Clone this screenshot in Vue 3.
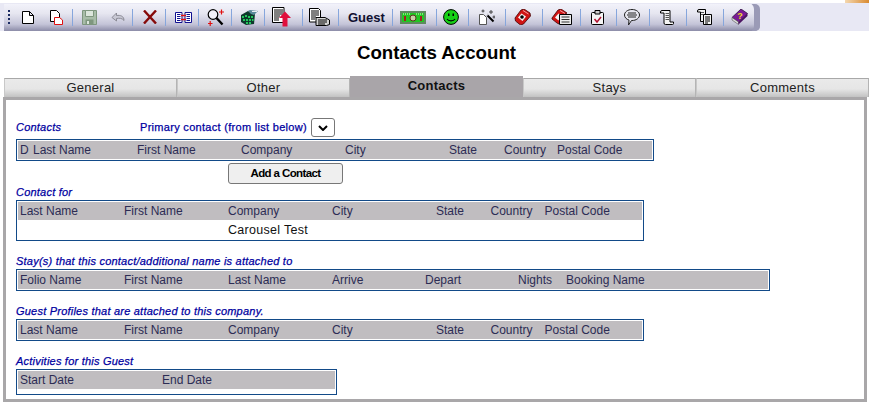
<template>
  <div class="page">
    <div class="corner"></div>
    <div class="strip">
      <div class="toolbar">
        <span class="grip"></span>
        <svg width="12" height="13" viewBox="0 0 12 13"><path d="M.5.5h7l4 4v8h-11zM7.500.5v4h4" fill="#fff" stroke="#000"/></svg>
        <svg width="13" height="15" viewBox="0 0 13 15"><path d="M.5.500h6l3 3v8h-9z" fill="#fff" stroke="#000"/><path d="M4.500 7.500h5l3 2.500v4.500h-8z" fill="#fff" stroke="#e01010"/></svg>
        <span class="sep"></span>
        <svg width="15" height="15" viewBox="0 0 15 15"><path d="M.5.500h14v14H.5z" fill="#a8bca8" stroke="#7e967e"/><path d="M3.500.5h8v6h-8z" fill="#dce6dc" stroke="#7e967e"/><path d="M3.500 9.500h8v5h-8z" fill="#7e967e"/><path d="M5 11h2v3H5z" fill="#dce6dc"/></svg>
        <svg width="14" height="10" viewBox="0 0 14 10"><path d="M1 5.500L5.500 1v2.500c4-.5 7.500.5 7.500 5-2-2.500-4.500-2.500-7.500-2V9z" fill="#c8c8d4" stroke="#84848e" stroke-width=".9"/></svg>
        <span class="sep"></span>
        <svg width="14" height="14" viewBox="0 0 14 14"><path d="M1 .5l12 13M13 .5L1 13.500" stroke="#860a0a" stroke-width="2.400"/></svg>
        <span class="sep"></span>
        <svg width="17" height="11" viewBox="0 0 17 11"><path d="M.5.500h6.500v10H.5zM10 .5h6.500v10H10z" fill="#fff" stroke="#101090"/><path d="M2 2.500h3.500M2 4.500h3.500M2 6.500h3.500M2 8.500h3.500M11.500 2.500H15M11.500 4.500H15M11.500 6.500H15M11.500 8.500H15" stroke="#101090"/><path d="M6 3.500h5M6 7.500h5" stroke="#e01010" stroke-width="1.400"/></svg>
        <span class="sep"></span>
        <svg width="18" height="17" viewBox="0 0 18 17"><circle cx="6" cy="5.500" r="4.800" fill="#f2f2fa" stroke="#000" stroke-width="1.200"/><path d="M9.500 9l6 6.500" stroke="#000" stroke-width="2.400"/><path d="M12 3h5M14.500.5v5M1 14.500h4.500M3.200 12v5" stroke="#e01010" stroke-width="1.200"/></svg>
        <span class="sep"></span>
        <svg width="17" height="15" viewBox="0 0 17 15"><path d="M0 5l7-4 7 3-1 10-8 1-5-3z" fill="#0d3a2c"/><path d="M1 6h2v2H1zM4 5h2v2H4zM7 6h2v2H7zM10 6h2v2h-2zM2 9h2v2H2zM5 9h2v2H5zM8 9h2v2H8zM11 9h1.500v2H11zM5 12h2v2H5zM8 12h2v2H8z" fill="#22c85c"/><path d="M7 1l2-1 8 1-4 4-3-1z" fill="#5a8a9a"/><path d="M11 1.500h5" stroke="#e8eef4"/></svg>
        <span class="sep"></span>
        <svg width="19" height="20" viewBox="0 0 19 20"><path d="M.5.500h11.500v15H.5z" fill="#fff" stroke="#000"/><path d="M2 3h9M2 5h9M2 7h9M2 9h6M2 11h5M2 13h5" stroke="#000"/><path d="M13 4.500l6 6.500h-3.500v8.500h-5V11H7z" fill="#e0103c"/></svg>
        <span class="sep"></span>
        <svg width="21" height="18" viewBox="0 0 21 18"><path d="M.5.500h9l2 2v11.500H.5z" fill="#fff" stroke="#000"/><path d="M2 3h8M2 5h8M2 7h8M2 9h5M2 11h4" stroke="#000"/><path d="M7 9.500h9l4.500 2.500v4.500l-3 1H7z" fill="#d4d4d4" stroke="#000"/><path d="M9 12h9M9 14h9M9 16h7" stroke="#000"/></svg>
        <span class="sep"></span>
        <span class="guest">Guest</span>
        <span class="sep"></span>
        <svg width="26" height="13" viewBox="0 0 26 13"><path d="M0 0h26v13H0z" fill="#5e8a5e"/><path d="M2 2h22v9H2z" fill="#22c822"/><circle cx="13" cy="7" r="3" fill="#c8d0a8" stroke="#603020"/><path d="M3 3h7M16 3h7" stroke="#e8f0d8" stroke-dasharray="1 1"/><path d="M5 5v5M21 5v5" stroke="#a02020" stroke-width="2"/></svg>
        <span class="sep"></span>
        <svg width="16" height="16" viewBox="0 0 16 16"><circle cx="8" cy="8" r="7.400" fill="#16d016" stroke="#000"/><path d="M5 4.500h1.500v2.500H5zM9.500 4.500H11v2.500H9.500z"/><path d="M4 10c1.500 2.500 6.500 2.500 8 0" fill="none" stroke="#000" stroke-width="1.100"/></svg>
        <span class="sep"></span>
        <svg width="16" height="16" viewBox="0 0 16 16"><path d="M.5 5.500h4l3 3v7h-7z" fill="#fff" stroke="#555"/><path d="M7.500 5.500l7 7" stroke="#000" stroke-width="2"/><path d="M6.500 4.500l2 2" stroke="#e8e8f0" stroke-width="2"/><path d="M4 .5v3M2.500 2h3M12 1v4M10 3h4M15 6.500v3M13.500 8h3" stroke="#333" stroke-width=".9"/></svg>
        <span class="sep"></span>
        <svg width="17" height="16" viewBox="0 0 17 16"><path d="M1 9l6-8 3-1 6 4 .5 3-7 8-3 1-5-4z" fill="#d01414" stroke="#400" stroke-width=".8"/><path d="M4 8.500l3.500-4 4.500 3-3.500 4.500z" fill="#f4f4f4"/><circle cx="8" cy="8" r="1.800" fill="#000"/><path d="M9 1.500l5.500 3.500" stroke="#f4a0a0"/></svg>
        <span class="sep"></span>
        <svg width="21" height="16" viewBox="0 0 21 16"><path d="M1 9l6-8 3-1 6 4-3 2-5 9-2-1-5-4z" fill="#d01414" stroke="#400" stroke-width=".8"/><path d="M9 1.500l5 3" stroke="#f4a0a0"/><path d="M4 8.500l3.500-4 3 2-3 5z" fill="#f4f4f4"/><path d="M8.500 5.500h12v10h-12z" fill="#ececec" stroke="#000"/><path d="M10.500 8h8M10.500 10.500h8M10.500 13h8" stroke="#333"/></svg>
        <span class="sep"></span>
        <svg width="13" height="15" viewBox="0 0 13 15"><path d="M.5 3.500q0-1 1-1h10q1 0 1 1v10q0 1-1 1h-10q-1 0-1-1z" fill="#f4f4f4" stroke="#000"/><path d="M4 .5h5v3.500H4z" fill="#ccc" stroke="#000"/><path d="M3.500 9l2.500 3 4-5" fill="none" stroke="#b01030" stroke-width="1.500"/></svg>
        <span class="sep"></span>
        <svg width="16" height="17" viewBox="0 0 16 17"><path d="M8 .5c4.300 0 7.500 2.500 7.500 5.500S12.300 11.500 8 11.500H7.500L4.500 16l.5-4.900C2.500 10.300.5 8.500.5 6 .5 3 3.700.5 8 .5z" fill="#e8e8f0" stroke="#222"/><path d="M4 4h8M3 6h10M4 8h8" stroke="#222"/></svg>
        <span class="sep"></span>
        <svg width="14" height="15" viewBox="0 0 14 15"><path d="M.5 2q0-1.500 1.500-1.500h8V12h3.500v1.500q0 1-1 1H5.500q-1.500 0-1.500-1.500V3H.5z" fill="#f4f4f4" stroke="#000"/><path d="M5.500 3.500H9M5.500 5.500H9M5.500 7.500H9M5.500 9.500H9" stroke="#555"/></svg>
        <span class="sep"></span>
        <svg width="15" height="16" viewBox="0 0 15 16"><path d="M.5 2Q.5.500 2 .5h6.500V6H6.500v6.500H3.500V3H.5z" fill="#f4f4f4" stroke="#000"/><path d="M4 3.500h3M4 5.500h2" stroke="#555"/><path d="M6.500 5.500h8v10h-8z" fill="#f4f4f4" stroke="#000"/><path d="M8 8h5M8 10h5M8 12h5M8 14h3" stroke="#000"/></svg>
        <span class="sep"></span>
        <svg width="17" height="16" viewBox="0 0 17 16"><path d="M1 8.500L10 0l6.500 4.500-9 8.500z" fill="#7a1a96" stroke="#301040" stroke-width=".8"/><path d="M1 8.500l6.500 4.500v2.500L1 11z" fill="#dcdcdc" stroke="#555" stroke-width=".6"/><path d="M7.500 13l9-8.500v2.500l-9 8.500z" fill="#4a1060"/><text x="9" y="9.500" class="book-mark">?</text></svg>
      </div>
    </div>

    <h1 class="title">Contacts Account</h1>

    <div class="tabs">
      <div
        v-for="tab in tabs"
        :key="tab"
        class="tab"
        :class="{ active: tab === 'Contacts' }"
      >
        {{ tab }}
      </div>
    </div>

    <div class="panel">
      <div class="primary-row">
        <span class="label label-first">Contacts</span>
        <span class="primary-label">Primary contact (from list below)</span>
        <span class="select">
          <svg width="10" height="6" viewBox="0 0 10 6"><path d="M1 1l4 4 4-4" fill="none" stroke="#000" stroke-width="2"/></svg>
        </span>
      </div>

      <div class="grid-box box-contacts">
        <div class="grid-head cols-contacts">
          <span v-for="col in contactCols" :key="col">{{ col }}</span>
        </div>
      </div>

      <button class="add-btn" type="button">Add a Contact</button>

      <div class="label label-for">Contact for</div>
      <div class="grid-box box-std">
        <div class="grid-head cols-std">
          <span v-for="col in stdCols" :key="col">{{ col }}</span>
        </div>
        <div class="grid-row cols-std">
          <span></span>
          <span></span>
          <span>Carousel Test</span>
        </div>
      </div>

      <div class="label label-section">Stay(s) that this contact/additional name is attached to</div>
      <div class="grid-box box-stays">
        <div class="grid-head cols-stays">
          <span v-for="col in stayCols" :key="col">{{ col }}</span>
        </div>
      </div>

      <div class="label label-section">Guest Profiles that are attached to this company.</div>
      <div class="grid-box box-std">
        <div class="grid-head cols-std">
          <span v-for="col in stdCols" :key="col">{{ col }}</span>
        </div>
      </div>

      <div class="label label-section">Activities for this Guest</div>
      <div class="grid-box box-activity">
        <div class="grid-head cols-activity">
          <span>Start Date</span>
          <span>End Date</span>
        </div>
      </div>
    </div>
  </div>
</template>

<script setup>
const tabs = ['General', 'Other', 'Contacts', 'Stays', 'Comments']
const stdCols = ['Last Name', 'First Name', 'Company', 'City', 'State', 'Country', 'Postal Code']
const contactCols = ['D', ...stdCols]
const stayCols = ['Folio Name', 'First Name', 'Last Name', 'Arrive', 'Depart', 'Nights', 'Booking Name']
</script>

<style>
html,
body {
  margin: 0;
  background: #fff;
}
</style>

<style scoped>
.page {
  position: relative;
  width: 869px;
  height: 415px;
  overflow: hidden;
  font-family: "Liberation Sans", Arial, sans-serif;
  background: #fff;
}

.corner {
  position: absolute;
  top: 0;
  right: 0;
  width: 24px;
  height: 3px;
  background: linear-gradient(90deg, #f4d8b0, #d98a30);
}

.strip {
  margin-top: 3px;
  height: 28px;
  background: #e8e8f4;
  display: flex;
  align-items: center;
}

.toolbar {
  margin-left: 4px;
  width: 756px;
  height: 27px;
  box-sizing: border-box;
  padding-left: 4px;
  border-radius: 0 5px 5px 0;
  background: linear-gradient(180deg, #f2f2fa 0%, #e6e6f0 35%, #c4c4d8 75%, #8c8ca8 100%);
  box-shadow: inset -7px 0 0 -1px #9a9ab6;
  display: grid;
  align-items: center;
  justify-items: start;
  grid-template-columns:
    14px 28px 22px 10px 29px 21px 11px 22px 10px 23px 9px 24px 10px 23px 8px 30px
    7px 29px 10px 44px 8px 36px 7px 25px 11px 26px 9px 28px 9px 29px 11px 25px 8px
    25px 11px 26px 11px 26px 8px 17px;
}

.grip {
  width: 2px;
  height: 15px;
  background: repeating-linear-gradient(180deg, #1c2c64 0 2px, transparent 2px 4px);
}

.sep {
  width: 1px;
  height: 17px;
  background: #86a6dc;
}

.book-mark {
  font-size: 9px;
  font-weight: 700;
  fill: #f0e020;
  text-anchor: middle;
}

.guest {
  font-size: 13px;
  font-weight: 700;
  color: #101030;
}

.title {
  margin: 10px 0 0;
  padding-left: 4px;
  height: 24px;
  line-height: 24px;
  font-size: 18.700px;
  font-weight: 700;
  text-align: center;
  color: #000;
}

.tabs {
  margin: 11px 0 0 4px;
  width: 865px;
  height: 21px;
  display: grid;
  grid-template-columns: repeat(5, 1fr);
  align-items: end;
}

.tab {
  height: 19px;
  box-sizing: border-box;
  border-top: 1px solid #a8a8a8;
  border-left: 1px solid #c8c8c8;
  border-right: 1px solid #b4b4b4;
  background: linear-gradient(180deg, #eaeaea 0%, #e6e6e6 55%, #c2c2c2 100%);
  font-size: 13px;
  letter-spacing: 0.25px;
  line-height: 17px;
  text-align: center;
  color: #222;
}

.tab.active {
  height: 21px;
  border: 0;
  background: #a9a5a9;
  font-weight: 700;
  line-height: 20px;
  color: #111;
}

.panel {
  width: 864px;
  height: 305px;
  margin-left: 3px;
  box-sizing: border-box;
  border: 3px solid #a9a7a9;
  padding: 0 0 0 10px;
}

.primary-row {
  height: 39px;
  box-sizing: border-box;
  padding-top: 18px;
  display: flex;
  align-items: flex-start;
}

.label {
  font-size: 11px;
  font-style: italic;
  font-weight: 400;
  letter-spacing: 0.22px;
  color: #0000a0;
  -webkit-text-stroke: 0.25px #0000a0;
  line-height: 14px;
}

.primary-row .label,
.primary-label {
  margin-top: 2px;
}

.label-first {
  width: 124px;
}

.primary-label {
  width: 171px;
  font-size: 11px;
  line-height: 14px;
  letter-spacing: 0.3px;
  color: #0000a0;
  -webkit-text-stroke: 0.25px #0000a0;
}

.select {
  width: 24px;
  height: 19px;
  box-sizing: border-box;
  border: 1px solid #777;
  border-radius: 3px;
  background: #fff;
  display: flex;
  align-items: center;
  justify-content: center;
}

.grid-box {
  box-sizing: border-box;
  border: 1px solid #124a88;
  padding: 1px;
}

.box-contacts {
  width: 638px;
}

.box-std {
  width: 628px;
}

.box-stays {
  width: 754px;
}

.box-activity {
  width: 321px;
  height: 26px;
}

.grid-head,
.grid-row {
  display: grid;
  align-items: center;
  font-size: 12px;
  line-height: 18px;
}

.grid-head {
  height: 18px;
  background: #c0bdc0;
  color: #2c2c54;
}

.grid-row {
  height: 19px;
  font-size: 12.500px;
  letter-spacing: 0.3px;
  color: #111;
}

.grid-head span,
.grid-row span {
  padding-left: 2px;
  white-space: nowrap;
}

.cols-contacts {
  grid-template-columns: 13px 104px 104px 104px 104px 55px 53px 1fr;
}

.cols-std {
  grid-template-columns: 104px 104px 104px 104px 54.500px 54px 1fr;
}

.cols-stays {
  grid-template-columns: 104px 104px 104px 93px 93px 48px 1fr;
}

.cols-activity {
  grid-template-columns: 142px 1fr;
}

.add-btn {
  display: block;
  width: 115px;
  height: 21px;
  margin: 2px 0 0 212px;
  padding: 0 0 2px;
  box-sizing: border-box;
  border: 1px solid #777;
  border-radius: 3px;
  background: #efefef;
  font-family: inherit;
  font-size: 11.500px;
  font-weight: 700;
  letter-spacing: -0.6px;
  color: #000;
}

.label-for {
  height: 16px;
  padding-top: 1px;
  box-sizing: border-box;
}

.label-section {
  margin-top: 13px;
  height: 15px;
}
</style>
